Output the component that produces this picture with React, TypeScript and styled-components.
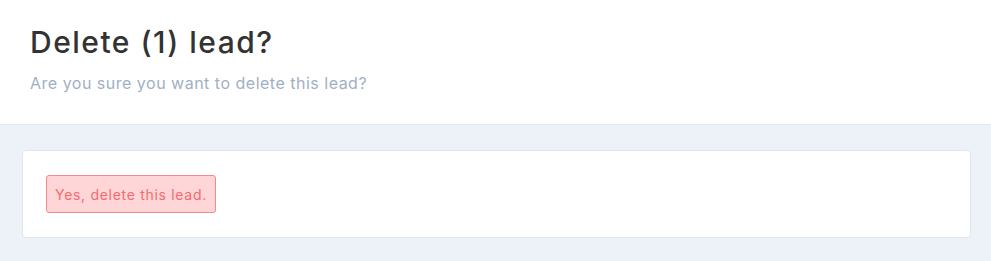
import { createGlobalStyle } from "styled-components";
import styled from "styled-components";

const GlobalStyle = createGlobalStyle`
  html, body {
    margin: 0;
    padding: 0;
    background: #edf1f8;
  }
  * {
    box-sizing: border-box;
  }
`

const StyledModal = styled.div`
  width: 991px;
  height: 261px;
  display: flex;
  flex-direction: column;
  font-family: Inter, "Noto Sans", sans-serif;
`

const StyledHeader = styled.div`
  height: 126px;
  padding: 24px 30px 0;
  background: #fff;
  border-bottom: 1px solid #e3e8ef;
`

const StyledTitle = styled.h2`
  margin: 0;
  color: #333;
  font-size: 30px;
  font-weight: 500;
  line-height: 36px;
  letter-spacing: 1.5px;
`

const StyledSubtitle = styled.p`
  margin: 13px 0 0;
  color: #9fb0c4;
  font-size: 16px;
  line-height: 20px;
  letter-spacing: 0.5px;
`

const StyledBody = styled.div`
  flex: 1;
  padding: 25px 20px 23px 22px;
  background: #edf1f8;
`

const StyledCard = styled.div`
  height: 88px;
  padding: 24px 23px;
  background: #fff;
  border: 1px solid #e1e6ee;
  border-radius: 4px;
`

const StyledDangerButton = styled.button`
  height: 38px;
  padding: 0 8px;
  display: inline-flex;
  align-items: center;
  background: #ffd6d7;
  border: 1px solid #f58a8c;
  border-radius: 3px;
  color: #f56a6e;
  font-family: inherit;
  font-size: 14px;
  letter-spacing: 0.7px;
  cursor: pointer;
`

export default function App() {
  return (
    <StyledModal>
      <GlobalStyle />
      <StyledHeader>
        <StyledTitle>Delete (1) lead?</StyledTitle>
        <StyledSubtitle>Are you sure you want to delete this lead?</StyledSubtitle>
      </StyledHeader>
      <StyledBody>
        <StyledCard>
          <StyledDangerButton>Yes, delete this lead.</StyledDangerButton>
        </StyledCard>
      </StyledBody>
    </StyledModal>
  )
}
